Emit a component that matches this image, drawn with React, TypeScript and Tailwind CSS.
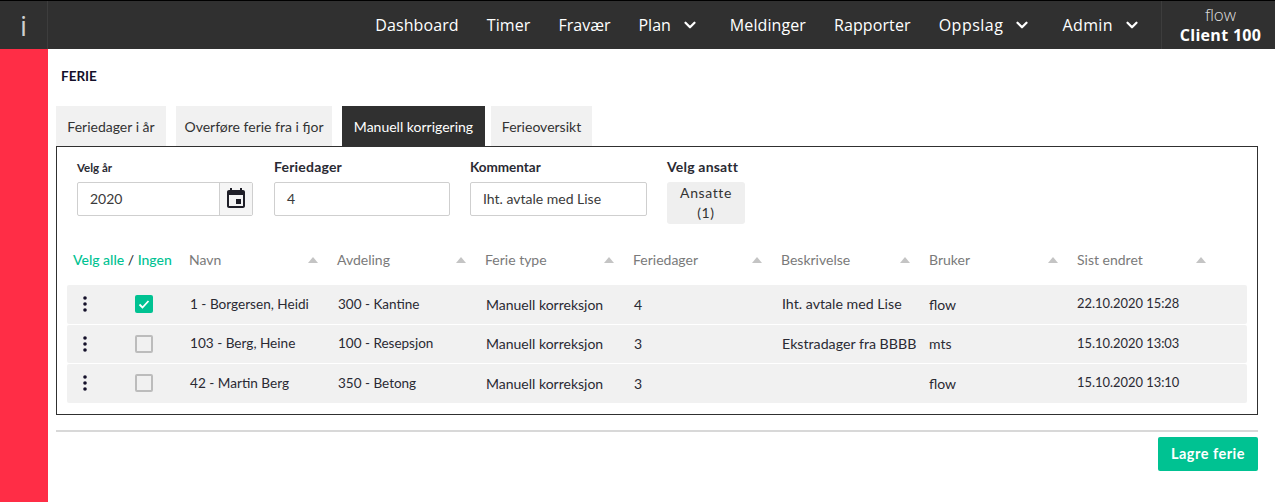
import React from 'react';
import { ChevronDown } from 'lucide-react';

const navItems = [
  { label: 'Dashboard', track: 'tracking-[0.1px]' },
  { label: 'Timer', track: 'tracking-[0.1px]' },
  { label: 'Fravær', track: '' },
  { label: 'Plan', menu: true, track: '' },
  { label: 'Meldinger', track: 'tracking-[0.1px]' },
  { label: 'Rapporter', track: 'tracking-[0.1px]' },
  { label: 'Oppslag', menu: true, track: 'tracking-[0.5px]' },
  { label: 'Admin', menu: true, track: 'tracking-[0.4px]' },
];

const tabs = [
  { label: 'Feriedager i år', box: 'w-[110px] mr-[10px]' },
  { label: 'Overføre ferie fra i fjor', box: 'w-[156px] mr-[10px]' },
  { label: 'Manuell korrigering', box: 'w-[143px] mr-[6px]', active: true },
  { label: 'Ferieoversikt', box: 'w-[101px]' },
];

const columns = ['Navn', 'Avdeling', 'Ferie type', 'Feriedager', 'Beskrivelse', 'Bruker', 'Sist endret'];

// tallene i fonten er bredere enn i originalen, derfor egen storrelse per kolonne
const cellText = ['pl-[1px] text-[13.6px]', 'pl-[1px] text-[13.5px]', 'pl-[1px] text-[14px]', 'pl-[1px] text-[14px]', 'pl-[1px] text-[14.2px]', 'text-[14px]', 'text-[12.9px]'];

const rows = [
  { checked: true, height: 'h-[39px]', cells: ['1 - Borgersen, Heidi', '300 - Kantine', 'Manuell korreksjon', '4', 'Iht. avtale med Lise', 'flow', '22.10.2020 15:28'] },
  { checked: false, height: 'h-[38px]', cells: ['103 - Berg, Heine', '100 - Resepsjon', 'Manuell korreksjon', '3', 'Ekstradager fra BBBB', 'mts', '15.10.2020 13:03'] },
  { checked: false, height: 'h-[39px]', cells: ['42 - Martin Berg', '350 - Betong', 'Manuell korreksjon', '3', '', 'flow', '15.10.2020 13:10'] },
];

const App = () => {
  return (
    <div className="w-[1275px] h-[502px] overflow-hidden flex flex-col bg-white font-['Lato',sans-serif] text-[#2a2a33]">
      {/* Topp */}
      <header className="h-[49px] shrink-0 flex bg-[#303030] border-t border-black text-white font-['Open_Sans',sans-serif]">
        <div className="w-[48px] flex items-center justify-center border-r border-[#3d3d3d] text-[28px] text-[#d0d0d0]">i</div>
        <nav className="flex-1 flex items-center justify-end gap-7 pr-[17px] text-[16px]">
          {navItems.map((item) => (
            <div key={item.label} className="flex items-center">
              <span className={item.track}>{item.label}</span>
              {item.menu && <ChevronDown className="ml-[10px] mr-[3px] w-[18px] h-[18px]" strokeWidth={3} />}
            </div>
          ))}
        </nav>
        <div className="w-[114px] pl-[4px] flex flex-col items-center justify-center border-l border-[#3d3d3d] leading-[20px]">
          <span className="text-[17px] font-light text-[#dddddd]">flow</span>
          <span className="text-[16px] font-bold tracking-[0.3px]">Client 100</span>
        </div>
      </header>

      <div className="flex-1 flex">
        <aside className="w-[48px] bg-[#ff2d46]"></aside>
        <main className="flex-1 pl-2 pr-[17px]">
          <h1 className="pl-[5px] pt-[20px] h-[57px] text-[13.5px] leading-[14px] font-bold text-[#14102a]">FERIE</h1>

          <div className="flex">
            {tabs.map((tab) => (
              <div
                key={tab.label}
                className={`${tab.box} h-[40px] flex items-center justify-center text-[14px] whitespace-nowrap ${tab.active ? 'bg-[#303030] text-white' : 'bg-[#f1f1f1] text-[#333333]'}`}
              >
                {tab.label}
              </div>
            ))}
          </div>

          {/* Skjema og tabell */}
          <section className="h-[269px] border border-[#303030] pl-[10px] pr-[10px]">
            <div className="flex pl-[10px] pt-[13px] h-[90px]">
              <div className="w-[176px] mr-[21px]">
                <label className="block h-[22px] text-[11.5px] leading-[16px] font-bold">Velg år</label>
                <div className="flex h-[34px] border border-[#cfcfcf] rounded-[2px]">
                  <div className="flex-1 flex items-center pl-3 pb-[1px] text-[14px] text-[#3a3a3a]">2020</div>
                  <div className="w-[33px] flex items-center justify-center bg-[#f5f5f5] border-l border-[#cfcfcf]">
                    <svg viewBox="0 0 24 24" className="w-[24px] h-[24px]" fill="#1f1f28">
                      <path d="M17 12h-5v5h5v-5zM16 1v2H8V1H6v2H5c-1.11 0-1.99.9-1.99 2L3 19c0 1.1.89 2 2 2h14c1.1 0 2-.9 2-2V5c0-1.1-.9-2-2-2h-1V1h-2zm3 18H5V8h14v11z" />
                    </svg>
                  </div>
                </div>
              </div>
              <div className="w-[176px] mr-[20px]">
                <label className="block h-[22px] text-[14px] tracking-[0.2px] leading-[14px] font-bold">Feriedager</label>
                <div className="h-[34px] flex items-center pl-3 pb-[1px] border border-[#cfcfcf] rounded-[2px] text-[14px] text-[#3a3a3a]">4</div>
              </div>
              <div className="w-[177px] mr-[20px]">
                <label className="block h-[22px] text-[13.5px] leading-[14px] font-bold">Kommentar</label>
                <div className="h-[34px] flex items-center pl-3 pb-[1px] border border-[#cfcfcf] rounded-[2px] text-[14px] text-[#3a3a3a]">Iht. avtale med Lise</div>
              </div>
              <div className="w-[78px]">
                <label className="block h-[22px] text-[14px] tracking-[0.2px] leading-[14px] font-bold whitespace-nowrap">Velg ansatt</label>
                <div className="h-[42px] flex items-center justify-center text-center bg-[#efefef] rounded-[3px] text-[14px] leading-[20px] tracking-[0.6px] text-[#333333]">
                  Ansatte<br />(1)
                </div>
              </div>
            </div>

            {/* Kolonner */}
            <div className="flex items-center h-[48px] pb-[3px] text-[14px] text-[#7a7a7a]">
              <div className="w-[122px] pl-[6px] whitespace-nowrap font-medium">
                <span className="text-[#00c292]">Velg alle</span>
                <span className="text-[#333333]"> / </span>
                <span className="text-[#00c292]">Ingen</span>
              </div>
              {columns.map((col) => (
                <div key={col} className="w-[148px] flex items-center justify-between pr-[19px]">
                  <span>{col}</span>
                  <span className="w-0 h-0 border-x-[5px] border-x-transparent border-b-[6px] border-b-[#c4c4c4]"></span>
                </div>
              ))}
            </div>

            {/* Rader */}
            <div className="flex flex-col gap-[1px]">
              {rows.map((row) => (
                <div key={row.cells[0]} className={`${row.height} flex items-center bg-[#f1f1f1] rounded-[2px] pb-[1px]`}>
                  <div className="w-[68px] pl-[16px]">
                    <svg viewBox="0 0 4 16" className="w-[4px] h-[16px]" fill="#14102a">
                      <circle cx="2" cy="2" r="1.8" />
                      <circle cx="2" cy="8" r="1.8" />
                      <circle cx="2" cy="14" r="1.8" />
                    </svg>
                  </div>
                  <div className="w-[54px]">
                    {row.checked ? (
                      <div className="w-[18px] h-[18px] flex items-center justify-center bg-[#00c292] rounded-[2px]">
                        <svg viewBox="0 0 12 12" className="w-[12px] h-[12px]" fill="none" stroke="white" strokeWidth="1.8">
                          <path d="M1.5 6.5 L4.5 9.5 L10.5 3" />
                        </svg>
                      </div>
                    ) : (
                      <div className="w-[18px] h-[18px] border-2 border-[#bcbcbc] rounded-[2px]"></div>
                    )}
                  </div>
                  {row.cells.map((cell, i) => (
                    <div key={i} className={`w-[148px] whitespace-nowrap ${cellText[i]}`}>{cell}</div>
                  ))}
                </div>
              ))}
            </div>
          </section>

          <div className="mt-[15px] h-[2px] bg-[#d8d8d8]"></div>
          <div className="flex justify-end mt-[5px]">
            <button className="w-[100px] h-[34px] bg-[#00c292] rounded-[2px] text-white text-[14.5px] tracking-[0.5px] font-bold">Lagre ferie</button>
          </div>
        </main>
      </div>
    </div>
  );
};

export default App;
